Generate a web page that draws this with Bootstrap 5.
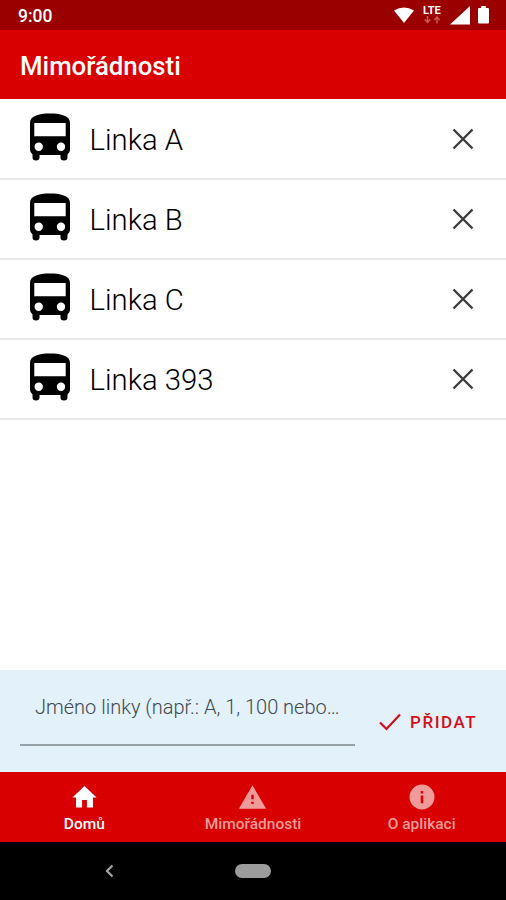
<!DOCTYPE html>
<html lang="cs">
<head>
<meta charset="utf-8">
<meta name="viewport" content="width=device-width, initial-scale=1">
<title>Mimořádnosti</title>
<link href="https://cdn.jsdelivr.net/npm/bootstrap@5.3.0/dist/css/bootstrap.min.css" rel="stylesheet">
<style>
body{font-family:Roboto,"Liberation Sans",sans-serif;color:#000;background:#fff;overflow:hidden}
svg{display:block;flex:none}
.status-bar{height:30px;background:#9b0000;padding:0 17px 0 18px;font-size:17.5px;font-weight:500;line-height:32px}
.status-icons{padding-top:5px}
.lte{width:19px;margin:0 8px 0 9px;font-size:11px;line-height:11px;font-weight:700}
.app-bar{height:69px;background:#d80000;padding:4px 20px 0}
.app-bar h1{font-size:25.8px;font-weight:500}
.line-row{height:80px;padding:0 32px 0 30px!important;border:0;border-bottom:2px solid #e9e9e9!important;border-radius:0;font-size:29.3px;font-weight:300;color:#000}
.line-row:first-child{height:81px}
.bus-icon{margin-bottom:4px}
.line-name{margin-left:19.500px;padding-top:2px;line-height:40px}
.add-bar{height:102px;background:#e3f1fb;padding:0 29px 0 20px}
.line-field{width:335px;height:76px;border-bottom:2px solid #97a1a8;padding:23px 14px 0 15px;font-size:20px;line-height:28px;font-weight:300;color:#40484e}
.add-btn{color:#d3101a;font-size:17px;font-weight:500;letter-spacing:1.5px;line-height:22px;padding-top:2px!important}
.add-btn svg{margin-right:9px}
.tab-bar{height:70px;background:#d80000;font-size:15.5px;font-weight:500}
.tab-link{color:#f19a9a;padding:11px 0 0;line-height:20px}
.tab-link span{margin-top:3px}
.tab-link.active{color:#fff}
.system-bar{height:58px;background:#000}
.back-slot{padding-left:9px}
.home-pill{width:36px;height:14px;background:#9c9c9c}
</style>
<script src="https://cdn.jsdelivr.net/npm/bootstrap@5.3.0/dist/js/bootstrap.bundle.min.js" defer></script>
</head>
<body class="vh-100 d-flex flex-column">
<svg width="0" height="0" class="position-absolute" aria-hidden="true">
  <symbol id="bus" viewBox="0 0 40 48">
    <path fill-rule="evenodd" d="M0 12V10C0 3 8 0.500 20 0.500S40 3 40 10V37Q40 39.500 37.500 41.500V44.500Q37.500 47.500 34 47.500T30.500 44.500V42H9.500V44.500Q9.500 47.500 6 47.500T2.500 44.500V41.500Q0 39.500 0 37ZM4.300 10V23.300H35.700V10ZM8.700 29.500a4.200 4.200 0 1 0 0 8.400a4.200 4.200 0 1 0 0-8.400ZM31 29.500a4.200 4.200 0 1 0 0 8.400a4.200 4.200 0 1 0 0-8.400Z"/>
  </symbol>
  <symbol id="cross" viewBox="0 0 22 22"><path d="M1.500 1.500l19 19M20.500 1.500l-19 19" stroke="#3c3c3c" stroke-width="2.400"/></symbol>
</svg>

<div class="status-bar d-flex justify-content-between text-white flex-shrink-0">
  <span>9:00</span>
  <div class="status-icons d-flex align-items-start">
    <svg width="20" height="20" viewBox="0 0 20 20" fill="#fff"><path d="M0 5.500Q10-.500 20 5.500L10 18Z"/></svg>
    <div class="lte">LTE
      <svg width="18" height="8" viewBox="0 0 18 8" fill="none" stroke="#c95555" stroke-width="1.500"><path d="M4.500 0v6M1.800 3.500l2.700 3 2.700-3M14 7.500v-6M11.300 4l2.700-3 2.700 3"/></svg>
    </div>
    <svg width="20" height="20" viewBox="0 0 20 20" fill="#fff"><path d="M0 19.500L20 1V19.500Z"/></svg>
    <svg class="ms-2" width="11" height="19" viewBox="0 0 11 19" fill="#fff"><path d="M3.200 1H7.800V3H10Q11 3 11 4V17.500Q11 18.500 10 18.500H1Q0 18.500 0 17.500V4Q0 3 1 3H3.200Z"/></svg>
  </div>
</div>

<header class="app-bar d-flex align-items-center text-white flex-shrink-0"><h1 class="m-0">Mimořádnosti</h1></header>

<main class="flex-grow-1 overflow-hidden">
  <ul class="list-group list-group-flush">
    <li class="list-group-item line-row d-flex align-items-center"><svg class="bus-icon" width="40" height="48"><use href="#bus"/></svg><span class="line-name">Linka A</span><button class="btn p-0 border-0 ms-auto" aria-label="Odebrat"><svg width="22" height="22"><use href="#cross"/></svg></button></li>
    <li class="list-group-item line-row d-flex align-items-center"><svg class="bus-icon" width="40" height="48"><use href="#bus"/></svg><span class="line-name">Linka B</span><button class="btn p-0 border-0 ms-auto" aria-label="Odebrat"><svg width="22" height="22"><use href="#cross"/></svg></button></li>
    <li class="list-group-item line-row d-flex align-items-center"><svg class="bus-icon" width="40" height="48"><use href="#bus"/></svg><span class="line-name">Linka C</span><button class="btn p-0 border-0 ms-auto" aria-label="Odebrat"><svg width="22" height="22"><use href="#cross"/></svg></button></li>
    <li class="list-group-item line-row d-flex align-items-center"><svg class="bus-icon" width="40" height="48"><use href="#bus"/></svg><span class="line-name">Linka 393</span><button class="btn p-0 border-0 ms-auto" aria-label="Odebrat"><svg width="22" height="22"><use href="#cross"/></svg></button></li>
  </ul>
</main>

<div class="add-bar d-flex justify-content-between align-items-start flex-shrink-0">
  <div class="line-field text-nowrap" role="textbox">Jméno linky (např.: A, 1, 100 nebo…</div>
  <button class="btn p-0 border-0 rounded-0 add-btn d-flex align-items-center align-self-center"><svg width="22" height="18" viewBox="0 0 22 18" fill="none" stroke="#d3101a" stroke-width="2.200"><path d="M1 9.500L7.500 16L21 1.500"/></svg>PŘIDAT</button>
</div>

<nav class="tab-bar nav nav-fill flex-nowrap flex-shrink-0">
  <a class="tab-link active col-4 d-flex flex-column align-items-center text-decoration-none" href="#">
    <svg width="29" height="28" viewBox="0 0 24 24" preserveAspectRatio="none" fill="currentColor"><path d="M10 21v-6.500h4V21h5v-8.500h3L12 2.500 2 12.500h3V21z"/></svg><span>Domů</span></a>
  <a class="tab-link col-4 d-flex flex-column align-items-center text-decoration-none" href="#">
    <svg width="29" height="28" viewBox="0 0 24 24" preserveAspectRatio="none" fill="currentColor"><path d="M.700 22h22.600L12 2 .700 22zm12.300-4h-2v-2h2v2zm0-4h-2v-4h2v4z"/></svg><span>Mimořádnosti</span></a>
  <a class="tab-link col-4 d-flex flex-column align-items-center text-decoration-none" href="#">
    <svg width="30" height="28" viewBox="0 0 24 24" fill="currentColor"><path d="M12 1.300a10.700 10.700 0 1 0 0 21.400 10.700 10.700 0 0 0 0-21.400zm1.100 16h-2.200v-6.500h2.200v6.500zm0-8.300h-2.200V6.800h2.200V9z"/></svg><span>O aplikaci</span></a>
</nav>

<div class="system-bar d-flex align-items-center flex-shrink-0">
  <div class="col-5 back-slot d-flex justify-content-center"><svg width="9" height="14" viewBox="0 0 9 14" fill="none" stroke="#a5a5a5" stroke-width="2.200"><path d="M7.500 1.500L2 7l5.500 5.500"/></svg></div>
  <div class="col-2 d-flex justify-content-center"><div class="home-pill rounded-pill"></div></div>
</div>
</body>
</html>
